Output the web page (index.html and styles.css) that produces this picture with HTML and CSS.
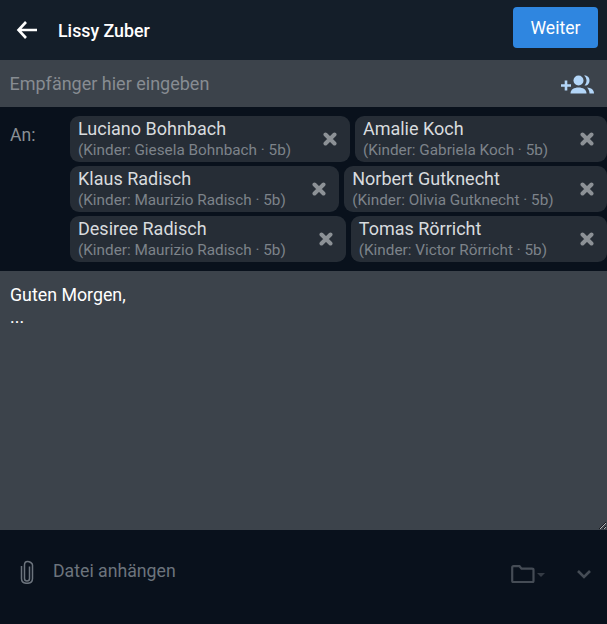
FILE: index.html
```html
<!DOCTYPE html>
<html lang="de">
<head>
    <meta charset="UTF-8">
    <meta name="viewport" content="width=device-width, initial-scale=1.0">
    <title>Neue Nachricht</title>
    <link rel="stylesheet" href="styles.css">
</head>
<body>

    <header class="topbar">
        <button class="back" aria-label="Zurück">
            <svg width="24" height="24" viewBox="0 0 24 24"><path d="M22 12H4.500M11 4 3.500 12l7.500 8" fill="none" stroke="#fff" stroke-width="2.600"/></svg>
        </button>
        <div class="sender">Lissy Zuber</div>
        <button class="next">Weiter</button>
    </header>

    <div class="search">
        <input type="text" class="search-input" placeholder="Empfänger hier eingeben">
        <svg class="add-group" width="34" height="22" viewBox="0 0 34 22">
            <path d="M0 11.500h10M5 6.500v10" stroke="#b3d6f8" stroke-width="2.600" fill="none"/>
            <circle cx="17.500" cy="6.500" r="5" fill="#b3d6f8"/>
            <path d="M9.500 19.500c0-4 3.500-6 8-6s8 2 8 6z" fill="#b3d6f8"/>
            <path d="M23 1.500c3.500-.5 5.500 2 5.500 5s-2 5.500-5 5c1.500-1.500 2-3.200 2-5s-.8-3.600-2.500-5zM26 13.500c4 .3 7 2 7 6h-4.500c0-2.500-1-4.500-2.500-6z" fill="#b3d6f8"/>
        </svg>
    </div>

    <section class="recipients">
        <div class="to-label">An:</div>
        <div class="chips">
            <div class="chip">
                <div class="chip-text"><div class="chip-name">Luciano Bohnbach</div><div class="chip-sub">(Kinder: Giesela Bohnbach · 5b)</div></div>
                <svg class="chip-x" width="14" height="14" viewBox="0 0 14 14"><path d="M2.500 2.500l9 9M11.500 2.500l-9 9" stroke="#8c9196" stroke-width="4" stroke-linecap="round"/></svg>
            </div>
            <div class="chip">
                <div class="chip-text"><div class="chip-name">Amalie Koch</div><div class="chip-sub">(Kinder: Gabriela Koch · 5b)</div></div>
                <svg class="chip-x" width="14" height="14" viewBox="0 0 14 14"><path d="M2.500 2.500l9 9M11.500 2.500l-9 9" stroke="#8c9196" stroke-width="4" stroke-linecap="round"/></svg>
            </div>
            <div class="chip">
                <div class="chip-text"><div class="chip-name">Klaus Radisch</div><div class="chip-sub">(Kinder: Maurizio Radisch · 5b)</div></div>
                <svg class="chip-x" width="14" height="14" viewBox="0 0 14 14"><path d="M2.500 2.500l9 9M11.500 2.500l-9 9" stroke="#8c9196" stroke-width="4" stroke-linecap="round"/></svg>
            </div>
            <div class="chip">
                <div class="chip-text"><div class="chip-name">Norbert Gutknecht</div><div class="chip-sub">(Kinder: Olivia Gutknecht · 5b)</div></div>
                <svg class="chip-x" width="14" height="14" viewBox="0 0 14 14"><path d="M2.500 2.500l9 9M11.500 2.500l-9 9" stroke="#8c9196" stroke-width="4" stroke-linecap="round"/></svg>
            </div>
            <div class="chip">
                <div class="chip-text"><div class="chip-name">Desiree Radisch</div><div class="chip-sub">(Kinder: Maurizio Radisch · 5b)</div></div>
                <svg class="chip-x" width="14" height="14" viewBox="0 0 14 14"><path d="M2.500 2.500l9 9M11.500 2.500l-9 9" stroke="#8c9196" stroke-width="4" stroke-linecap="round"/></svg>
            </div>
            <div class="chip">
                <div class="chip-text"><div class="chip-name">Tomas Rörricht</div><div class="chip-sub">(Kinder: Victor Rörricht · 5b)</div></div>
                <svg class="chip-x" width="14" height="14" viewBox="0 0 14 14"><path d="M2.500 2.500l9 9M11.500 2.500l-9 9" stroke="#8c9196" stroke-width="4" stroke-linecap="round"/></svg>
            </div>
        </div>
    </section>

    <textarea class="message">Guten Morgen,
...</textarea>

    <footer class="attach">
        <svg class="clip" width="14" height="24" viewBox="0 0 14 24"><path d="M9.500 6.500v12c0 1.500-1 2.500-2.500 2.500s-2.500-1-2.500-2.500V5c0-2 1-3.500 3-3.500S12.500 3 12.500 5v13.500c0 3-2.200 4.800-5.500 4.800s-5.500-1.800-5.500-4.800V6" fill="none" stroke="#6c747d" stroke-width="1.500"/></svg>
        <span class="attach-label">Datei anhängen</span>
        <svg class="folder" width="24" height="18" viewBox="0 0 24 18"><path d="M1.200 16V2.500c0-.7.500-1.300 1.300-1.300h6l2 2.500h10.500c.8 0 1.500.6 1.500 1.300V16c0 .7-.7 1.200-1.500 1.200h-18.300c-.8 0-1.500-.5-1.500-1.200z" fill="none" stroke="#454c55" stroke-width="2.200"/></svg>
        <span class="caret"></span>
        <svg class="chevron" width="16" height="10" viewBox="0 0 16 10"><path d="M2 2l6 6 6-6" fill="none" stroke="#454c55" stroke-width="2.600"/></svg>
    </footer>

</body>
</html>
```

FILE: styles.css
```css
* {
    box-sizing: border-box;
}

body {
    margin: 0;
    height: 624px;
    overflow: hidden;
    display: flex;
    flex-direction: column;
    background-color: #09111c;
    color: white;
    font-family: Roboto, sans-serif;
}

button {
    font-family: inherit;
    border: none;
    cursor: pointer;
}

.topbar {
    height: 60px;
    display: flex;
    align-items: flex-start;
    padding-right: 9px;
    background-color: #141e29;
}

.back {
    width: 58px;
    height: 60px;
    padding: 0 0 0 15px;
    display: flex;
    align-items: center;
    background: none;
}

.sender {
    flex: 1;
    line-height: 61px;
    font-size: 17.800px;
    font-weight: 500;
}

.next {
    width: 85px;
    height: 41px;
    margin-top: 7px;
    border-radius: 4px;
    background-color: #2f86e0;
    color: white;
    font-size: 17.600px;
}

.search {
    height: 47px;
    display: flex;
    align-items: center;
    padding: 0 12px 0 9.500px;
    background-color: #3c434b;
}

.search-input {
    flex: 1;
    min-width: 0;
    padding: 0;
    border: none;
    outline: none;
    background: none;
    color: white;
    font-family: inherit;
    font-size: 18px;
}

.search-input::placeholder {
    color: #878c92;
    opacity: 1;
}

.add-group {
    margin-top: 2px;
}

.recipients {
    height: 164px;
    display: flex;
    padding: 9px 0 0 10px;
}

.to-label {
    width: 60px;
    padding-top: 9px;
    color: #8a8f95;
    font-size: 17.600px;
}

.chips {
    flex: 1;
    display: flex;
    flex-wrap: wrap;
    gap: 4px 5px;
    align-content: flex-start;
}

.chip {
    flex-grow: 1;
    height: 46px;
    display: flex;
    align-items: center;
    justify-content: space-between;
    gap: 24px;
    padding: 0 13px 2px 8px;
    border-radius: 9px;
    background-color: #262d36;
}

.chip-name {
    color: #d8dbde;
    font-size: 18px;
    line-height: 24px;
}

.chip-sub {
    color: #7d838a;
    font-size: 15.300px;
    line-height: 19px;
}

.chip-x {
    flex-shrink: 0;
    margin-top: 2px;
}

.message {
    display: block;
    width: 100%;
    height: 259px;
    padding: 13px 10px;
    border: none;
    outline: none;
    resize: both;
    background-color: #3c434b;
    color: white;
    font-family: inherit;
    font-size: 17.800px;
    line-height: 22px;
}

.attach {
    flex: 1;
    display: flex;
    align-items: flex-start;
    padding: 30px 15px 0 20px;
}

.clip {
    margin-right: 19px;
}

.attach-label {
    flex: 1;
    color: #6c747d;
    font-size: 17.700px;
    line-height: 24px;
    margin-top: -1px;
}

.folder {
    margin-top: 5px;
}

.caret {
    width: 0;
    height: 0;
    margin: 13px 15px 0 2px;
    border-left: 4px solid transparent;
    border-right: 4px solid transparent;
    border-top: 4px solid #343b44;
}

.chevron {
    margin: 9px 0 0 16.500px;
}
```
